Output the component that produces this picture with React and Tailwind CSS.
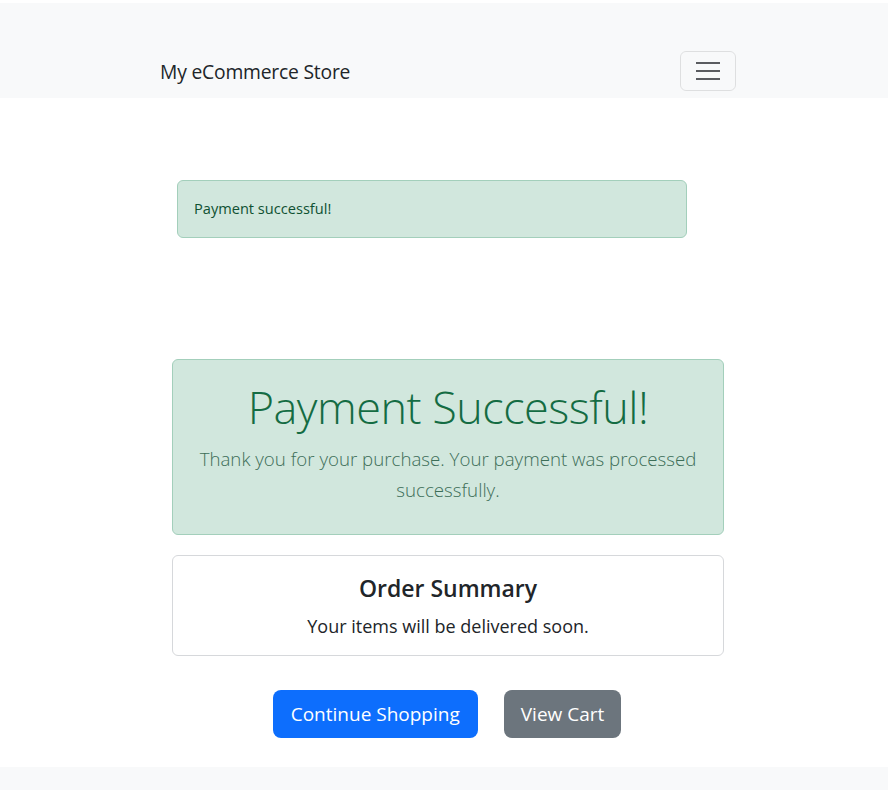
import React from 'react';

const Toggler = () => (
  <button className="w-[56px] h-[40px] rounded-[6px] border border-black/10 flex flex-col items-center justify-center gap-[6px]">
    <span className="block w-[24px] h-[2px] bg-[#5a5c60]" />
    <span className="block w-[24px] h-[2px] bg-[#5a5c60]" />
    <span className="block w-[24px] h-[2px] bg-[#5a5c60]" />
  </button>
);

export default function App() {
  return (
    <div className="min-h-[790px] bg-white flex flex-col text-[#212529]" style={{ fontFamily: '"Open Sans", "Noto Sans", sans-serif' }}>
      <div className="h-[3px]" />
      <nav className="bg-[#f8f9fa] h-[95px]">
        <div className="w-[576px] ml-[160px] pt-[48px] flex items-center justify-between">
          <span className="text-[19.3px] leading-[32px] tracking-[-0.2px] pt-[2px]">My eCommerce Store</span>
          <Toggler />
        </div>
      </nav>

      <main className="flex-1">
        <div className="ml-[177px] mt-[82px] w-[510px] h-[58px] rounded-[6px] border border-[#a3cfbb] bg-[#d1e7dd] text-[#0f5132] flex items-center px-[16px] text-[14.6px]">
          Payment successful!
        </div>

        <div className="ml-[172px] mt-[121px] w-[552px] h-[176px] rounded-[6px] border border-[#a3cfbb] bg-[#d1e7dd] flex flex-col items-center pt-[14px] px-[20px] text-center">
          <h1 className="text-[45px] leading-[66px] font-light text-[#146c43] tracking-[-0.5px]">Payment Successful!</h1>
          <p className="mt-[3px] text-[18.7px] leading-[31px] font-light text-[#3d6e58]">
            Thank you for your purchase. Your payment was processed successfully.
          </p>
        </div>

        <div className="ml-[172px] mt-[20px] w-[552px] h-[101px] rounded-[6px] border border-[#d6d8db] flex flex-col items-center pt-[16px] text-center">
          <h2 className="text-[23px] leading-[32px] font-semibold">Order Summary</h2>
          <p className="mt-[8px] text-[18px] leading-[28px]">Your items will be delivered soon.</p>
        </div>

        <div className="mt-[34px] flex justify-center gap-[26px] pl-[6px]">
          <button className="h-[48px] px-[18px] rounded-[8px] bg-[#0d6efd] text-white text-[19px]">Continue Shopping</button>
          <button className="h-[48px] px-[17px] rounded-[8px] bg-[#6c757d] text-white text-[19px]">View Cart</button>
        </div>
      </main>

      <footer className="bg-[#f8f9fa] h-[23px]" />
    </div>
  );
}
